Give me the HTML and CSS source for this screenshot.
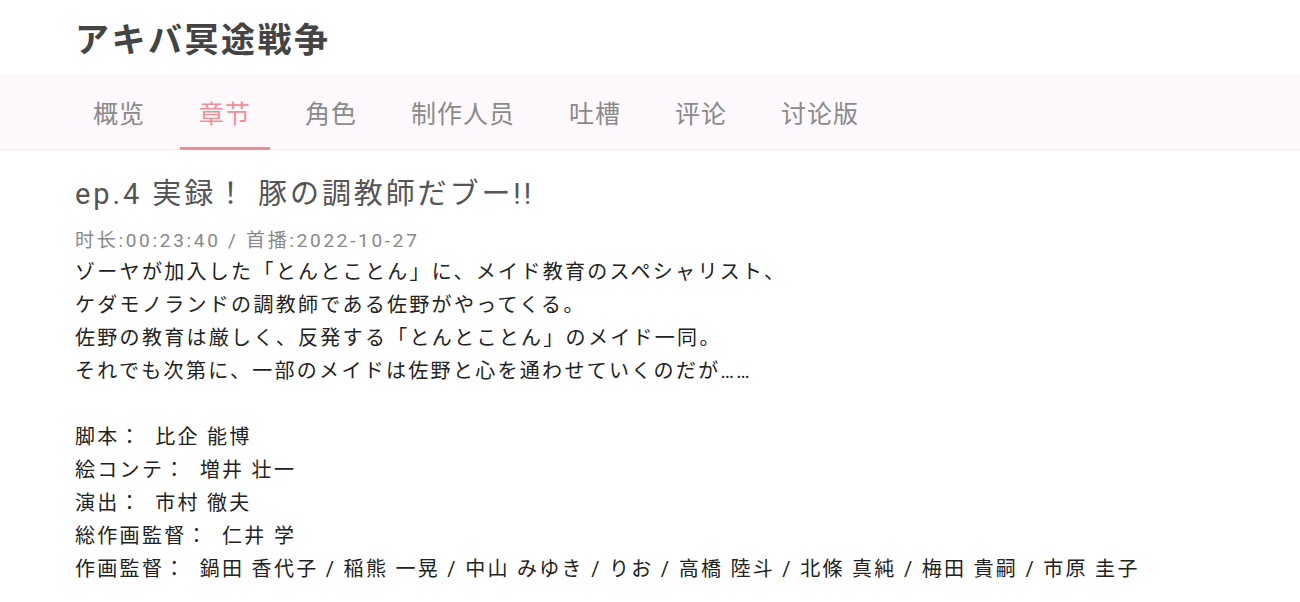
FILE: index.html
```html
<!DOCTYPE html>
<html lang="ja">
<head>
    <meta charset="UTF-8">
    <meta name="viewport" content="width=device-width, initial-scale=1.0">
    <title>アキバ冥途戦争</title>
    <link rel="stylesheet" href="styles.css">
</head>
<body>
    <div class="headerClass">
        <h1 class="titleClass">アキバ冥途戦争</h1>
    </div>
    <div class="navClass">
        <div class="tabClass">概览</div>
        <div class="tabClass activeTabClass">章节</div>
        <div class="tabClass">角色</div>
        <div class="tabClass">制作人员</div>
        <div class="tabClass">吐槽</div>
        <div class="tabClass">评论</div>
        <div class="tabClass">讨论版</div>
    </div>
    <div class="episodeClass">
        <h2 class="episodeTitleClass">ep.4 実録！ 豚の調教師だブー!!</h2>
        <div class="metaClass">时长:00:23:40 / 首播:2022-10-27</div>
        <div class="descClass">
            <div>ゾーヤが加入した「とんとことん」に、メイド教育のスペシャリスト、</div>
            <div>ケダモノランドの調教師である佐野がやってくる。</div>
            <div>佐野の教育は厳しく、反発する「とんとことん」のメイド一同。</div>
            <div>それでも次第に、一部のメイドは佐野と心を通わせていくのだが……</div>
            <div>&nbsp;</div>
            <div><span class="staffLabelClass">脚本：</span> 比企 能博</div>
            <div><span class="staffLabelClass">絵コンテ：</span> 増井 壮一</div>
            <div><span class="staffLabelClass">演出：</span> 市村 徹夫</div>
            <div><span class="staffLabelClass">総作画監督：</span> 仁井 学</div>
            <div><span class="staffLabelClass">作画監督：</span> 鍋田 香代子 / 稲熊 一晃 / 中山 みゆき / りお / 高橋 陸斗 / 北條 真純 / 梅田 貴嗣 / 市原 圭子</div>
        </div>
    </div>
</body>
</html>
```

FILE: styles.css
```css
body{
    margin: 0;
    background: #fff;
    font-family: "Roboto", "Noto Sans CJK JP", sans-serif;
}
.headerClass{
    height: 75px;
    display: flex;
    align-items: center;
    padding-left: 75px;
}
.titleClass{
    margin: 0;
    font-size: 34px;
    font-weight: bold;
    color: #444;
    font-family: "Noto Sans CJK JP", sans-serif;
    letter-spacing: 2.5px;
}
.navClass{
    height: 74px;
    background: #fdf8fc;
    border-bottom: 1px solid #ececec;
    display: flex;
    gap: 16px;
    padding-left: 74px;
    font-family: "Noto Sans CJK SC", sans-serif;
}
.tabClass{
    font-size: 25px;
    color: #8a8a8a;
    padding: 0 19px;
    display: flex;
    align-items: center;
    border-bottom: 3px solid transparent;
    margin-bottom: -1px;
    padding-top: 2px;
    letter-spacing: 1px;
}
.activeTabClass{
    color: #ee9098;
    border-bottom-color: #ec8c94;
}
.episodeClass{
    padding-left: 75px;
}
.episodeTitleClass{
    margin: 0;
    padding-top: 23px;
    font-size: 29px;
    font-weight: normal;
    color: #555;
    line-height: 42px;
    letter-spacing: 2.9px;
}
.metaClass{
    margin-top: 12px;
    font-size: 19px;
    color: #888;
    line-height: 28px;
    letter-spacing: 2.7px;
}
.descClass{
    font-size: 20px;
    color: #222;
    line-height: 33px;
    letter-spacing: 2.3px;
    padding-top: 1px;
}
.staffLabelClass{
    margin-right: 6px;
}
```
